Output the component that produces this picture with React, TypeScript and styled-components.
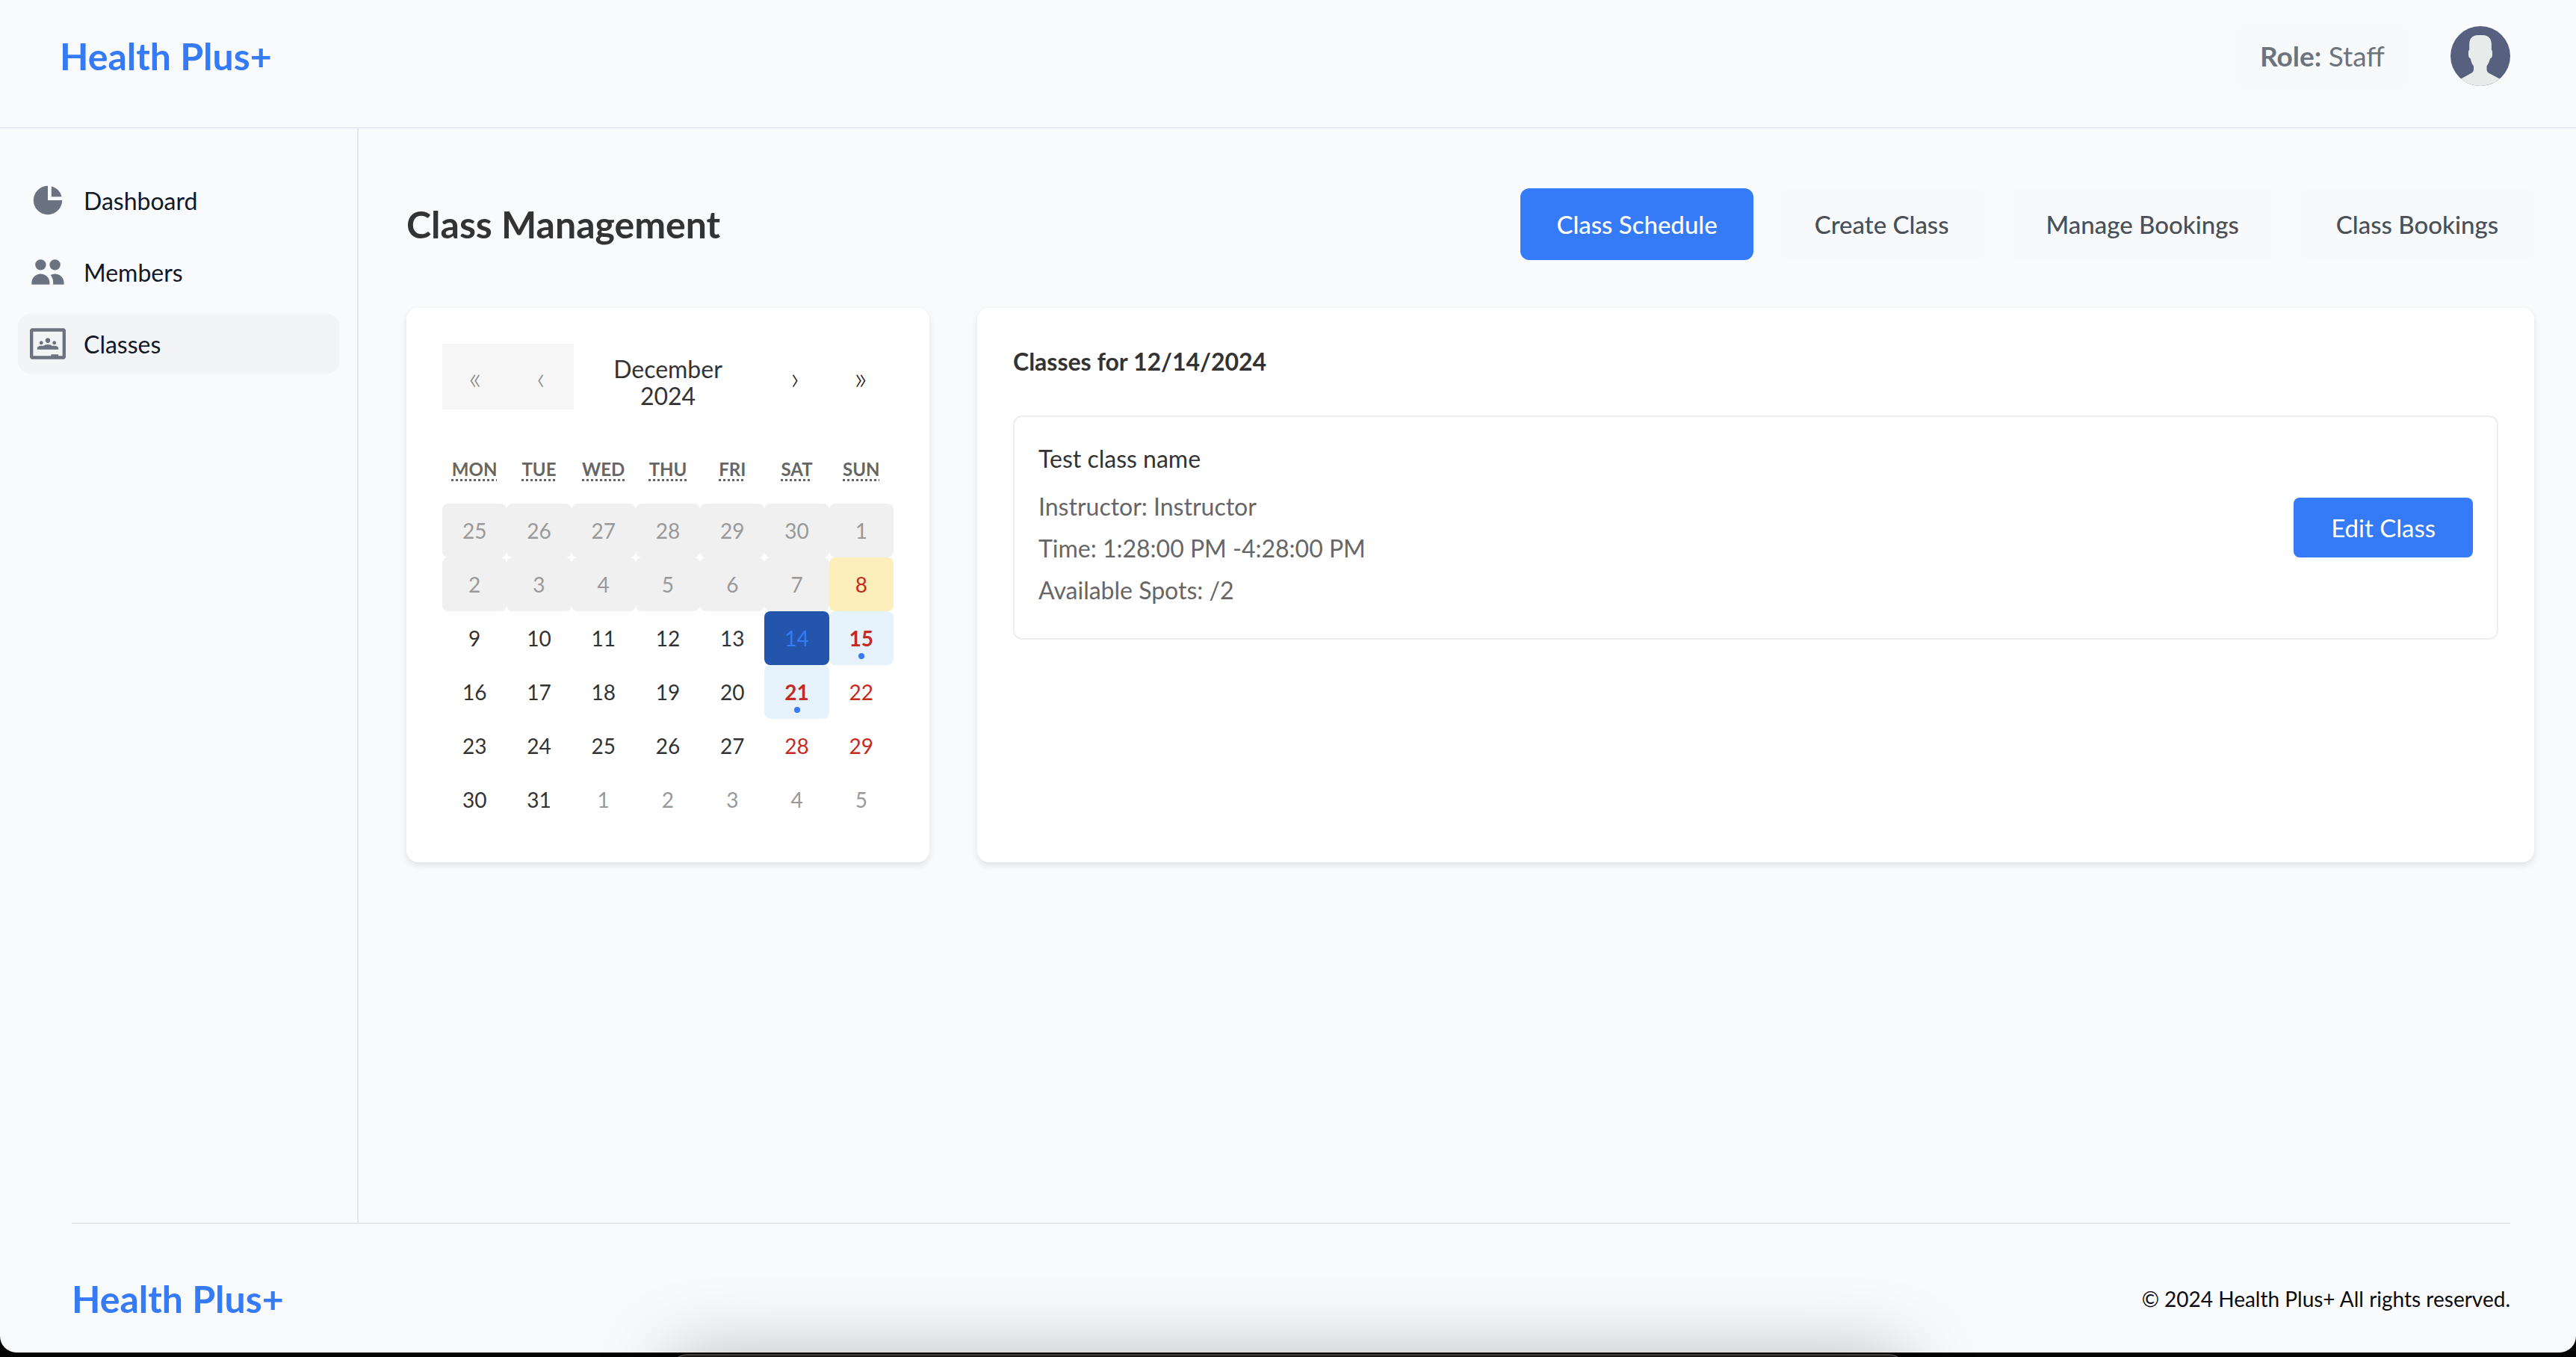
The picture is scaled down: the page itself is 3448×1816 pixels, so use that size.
import React from "react";
import styled, { createGlobalStyle, css } from "styled-components";
import { HiChartPie, HiUsers } from "react-icons/hi";
import { SiGoogleclassroom } from "react-icons/si";

const GlobalStyle = createGlobalStyle`
  *, *::before, *::after { box-sizing: border-box; }
  body {
    margin: 0;
    background: #050404;
    color: #333;
    font-family: Lato, "Liberation Sans", sans-serif;
    font-size: 32px;
  }
  h1, h2, h3, p, ul { margin: 0; padding: 0; }
  button { font-family: inherit; border: 0; cursor: pointer; }
`;

const Desktop = styled.div`
  position: relative;
  min-height: 100vh;
  padding-bottom: 6px;
  display: flex;
  overflow: hidden;
`;

const Page = styled.div`
  flex: 1;
  display: flex;
  flex-direction: column;
  background: #f9fafc;
  border-radius: 0 0 22px 22px;
`;

const Header = styled.header`
  display: flex;
  align-items: center;
  justify-content: space-between;
  padding: 31px 88px 51px 80px;
  border-bottom: 2px solid #e8ebf3;
`;

const Brand = styled.a`
  color: #357af6;
  font-size: 50px;
  line-height: 60px;
  font-weight: 700;
  text-decoration: none;
`;

const Account = styled.div`
  display: flex;
  align-items: center;
  gap: 56px;
`;

const Role = styled.p`
  padding: 16px 32px;
  border-radius: 12px;
  background: #f8f9fb;
  color: #6c757d;
  font-size: 37px;
  line-height: 56px;
`;

const AvatarButton = styled.button`
  width: 80px;
  height: 80px;
  padding: 0;
  background: none;
  svg { display: block; }
`;

const Body = styled.div`
  flex: 1;
  display: flex;
`;

const Sidebar = styled.nav`
  flex: 0 0 480px;
  padding: 56px 24px;
  border-right: 2px solid #e5e7eb;
`;

const NavList = styled.ul`
  display: flex;
  flex-direction: column;
  gap: 16px;
  list-style: none;
`;

const NavLink = styled.a<{ $active?: boolean }>`
  display: flex;
  align-items: center;
  gap: 24px;
  height: 80px;
  padding: 0 16px;
  border-radius: 16px;
  background: ${(p) => (p.$active ? "#f3f4f6" : "transparent")};
  color: #111827;
  text-decoration: none;
  svg { width: 48px; height: 48px; color: #6b7280; }
`;

const Main = styled.main`
  flex: 1;
  padding: 80px 56px 80px 64px;
`;

const TitleBar = styled.div`
  display: flex;
  align-items: center;
  justify-content: space-between;
  margin-bottom: 64px;
`;

const Title = styled.h1`
  font-size: 50px;
  line-height: 60px;
  font-weight: 700;
`;

const Tabs = styled.div`
  display: flex;
  gap: 34px;
`;

const Tab = styled.button<{ $active?: boolean }>`
  height: 96px;
  padding: 0 48px;
  border-radius: 12px;
  font-size: 33px;
  font-weight: 500;
  background: ${(p) => (p.$active ? "#357af6" : "#f8f9fb")};
  color: ${(p) => (p.$active ? "#fff" : "#495057")};
`;

const Columns = styled.div`
  display: grid;
  grid-template-columns: 700px 1fr;
  gap: 64px;
`;

const Card = styled.section`
  padding: 48px;
  border-radius: 16px;
  background: #fff;
  box-shadow: 0 4px 8px rgba(0, 0, 0, 0.1);
`;

const CalendarNav = styled.div`
  display: grid;
  grid-template-columns: 88px 88px 1fr 88px 88px;
  height: 88px;
  margin-bottom: 32px;
`;

const NavButton = styled.button`
  padding: 0;
  background: none;
  color: #222;
  font-size: 44px;
  font-weight: 300;
  line-height: 80px;
  &:disabled { background: #f6f6f6; color: #888; cursor: default; }
`;

const MonthButton = styled.button`
  padding: 16px 48px 0;
  background: none;
  color: #333;
  font-size: 32px;
  line-height: 36px;
`;

const WeekGrid = styled.div`
  display: grid;
  grid-template-columns: repeat(7, 1fr);
`;

const Weekday = styled.div`
  height: 94px;
  color: #666;
  font-size: 24px;
  line-height: 96px;
  font-weight: 700;
  text-align: center;
  abbr { text-decoration: underline dotted 3px; text-underline-offset: 4px; }
`;

type DayKind = "past" | "plain" | "weekend" | "today" | "selected" | "booked" | "next";

const dayStyles = {
  past: css`background: #f0f0f0; color: #999;`,
  plain: css`color: #333;`,
  weekend: css`color: #c42b1e;`,
  today: css`background: #fcefbc; color: #c42b1e;`,
  selected: css`background: #2355ad; color: #357af6;`,
  booked: css`background: #e6f2fc; color: #c42b1e; font-weight: 700;`,
  next: css`color: #999;`,
};

const Day = styled.button<{ $kind: DayKind }>`
  position: relative;
  height: 72px;
  padding: 0;
  border-radius: 8px;
  background: none;
  font-size: 28px;
  ${(p) => dayStyles[p.$kind]}
`;

const Dot = styled.span`
  position: absolute;
  bottom: 8px;
  left: 50%;
  width: 8px;
  height: 8px;
  margin-left: -4px;
  border-radius: 50%;
  background: #357af6;
`;

const ListTitle = styled.h2`
  margin-bottom: 48px;
  font-size: 32px;
  line-height: 48px;
  font-weight: 700;
`;

const ClassItem = styled.article`
  display: flex;
  align-items: center;
  justify-content: space-between;
  padding: 32px;
  border: 2px solid #eee;
  border-radius: 12px;
`;

const ClassName = styled.h3`
  margin-bottom: 16px;
  font-size: 32px;
  line-height: 48px;
  font-weight: 400;
`;

const Detail = styled.p`
  margin-bottom: 8px;
  color: #666;
  line-height: 48px;
`;

const EditButton = styled.button`
  height: 80px;
  padding: 0 50px;
  border-radius: 8px;
  background: #357af6;
  color: #fff;
  font-size: 33px;
`;

const Footer = styled.footer`
  display: flex;
  align-items: center;
  justify-content: space-between;
  margin: 0 88px 0 96px;
  padding: 70px 0 42px;
  border-top: 2px solid #e5e7ea;
`;

const Copyright = styled.p`
  color: #0c0c10;
  font-size: 28px;
`;

const Dock = styled.div`
  position: absolute;
  right: 26%;
  bottom: -160px;
  left: 26%;
  height: 164px;
  border-top: 2px solid #453f3d;
  border-radius: 24px 24px 0 0;
  background: #1c1816;
  box-shadow: 0 0 100px rgba(0, 0, 0, 0.25);
`;

const weekdays = [
  ["Mon", "Monday"], ["Tue", "Tuesday"], ["Wed", "Wednesday"], ["Thu", "Thursday"],
  ["Fri", "Friday"], ["Sat", "Saturday"], ["Sun", "Sunday"],
];

const kindOf = (offset: number): DayKind => {
  const date = offset - 5;
  if (date < 8) return "past";
  if (date === 8) return "today";
  if (date === 14) return "selected";
  if (date === 15 || date === 21) return "booked";
  if (date > 31) return "next";
  return offset % 7 > 4 ? "weekend" : "plain";
};

const days = Array.from({ length: 42 }, (_, offset) => {
  const date = offset - 5;
  return { label: date < 1 ? date + 30 : date > 31 ? date - 31 : date, kind: kindOf(offset) };
});

const tabs = ["Class Schedule", "Create Class", "Manage Bookings", "Class Bookings"];

const Avatar = () => (
  <svg width="80" height="80" viewBox="0 0 80 80" aria-hidden="true">
    <circle cx="40" cy="40" r="40" fill="#57617f" />
    <path
      fill="#e7eceb"
      d="M14 70.4 L28.5 62.6 C30.4 61.4 31 59.600 31 57.500 L31 53.500 C28.800 50.500 27.300 47 26.800 43.500 C25 42.500 24 40.500 24 38.500 L24 34.500 C24 33.200 24.400 32.300 25.200 31.700 L25.200 24 C25.200 16 30 12 37 12 L43 12 C50 12 54.900 16 54.900 24 L54.900 31.700 C55.600 32.300 56 33.200 56 34.500 L56 38.500 C56 40.800 55 42.800 53 43.500 C52.300 47 50.900 50.300 48.500 53.500 L48.500 57 C48.500 59.800 49.300 61.700 51.200 62.700 L65.800 70.500 A40 40 0 0 1 14 70.400Z"
    />
  </svg>
);

export default function App() {
  return (
    <Desktop>
      <GlobalStyle />
      <Page>
        <Header>
          <Brand href="#">Health Plus+</Brand>
          <Account>
            <Role><strong>Role:</strong> Staff</Role>
            <AvatarButton aria-label="Account"><Avatar /></AvatarButton>
          </Account>
        </Header>
        <Body>
          <Sidebar>
            <NavList>
              <li><NavLink href="#"><HiChartPie />Dashboard</NavLink></li>
              <li><NavLink href="#"><HiUsers />Members</NavLink></li>
              <li><NavLink href="#" $active><SiGoogleclassroom />Classes</NavLink></li>
            </NavList>
          </Sidebar>
          <Main>
            <TitleBar>
              <Title>Class Management</Title>
              <Tabs>
                {tabs.map((tab, i) => <Tab key={tab} $active={i === 0}>{tab}</Tab>)}
              </Tabs>
            </TitleBar>
            <Columns>
              <Card>
                <CalendarNav>
                  <NavButton disabled>«</NavButton>
                  <NavButton disabled>‹</NavButton>
                  <MonthButton>December 2024</MonthButton>
                  <NavButton>›</NavButton>
                  <NavButton>»</NavButton>
                </CalendarNav>
                <WeekGrid>
                  {weekdays.map(([short, full]) => (
                    <Weekday key={short}><abbr title={full}>{short.toUpperCase()}</abbr></Weekday>
                  ))}
                </WeekGrid>
                <WeekGrid>
                  {days.map((day, i) => (
                    <Day key={i} $kind={day.kind} disabled={day.kind === "past"}>
                      {day.label}
                      {day.kind === "booked" && <Dot />}
                    </Day>
                  ))}
                </WeekGrid>
              </Card>
              <Card>
                <ListTitle>Classes for 12/14/2024</ListTitle>
                <ClassItem>
                  <div>
                    <ClassName>Test class name</ClassName>
                    <Detail>Instructor: Instructor</Detail>
                    <Detail>Time: 1:28:00 PM -4:28:00 PM</Detail>
                    <Detail>Available Spots: /2</Detail>
                  </div>
                  <EditButton>Edit Class</EditButton>
                </ClassItem>
              </Card>
            </Columns>
          </Main>
        </Body>
        <Footer>
          <Brand href="#">Health Plus+</Brand>
          <Copyright>© 2024 Health Plus+ All rights reserved.</Copyright>
        </Footer>
      </Page>
      <Dock />
    </Desktop>
  );
}
